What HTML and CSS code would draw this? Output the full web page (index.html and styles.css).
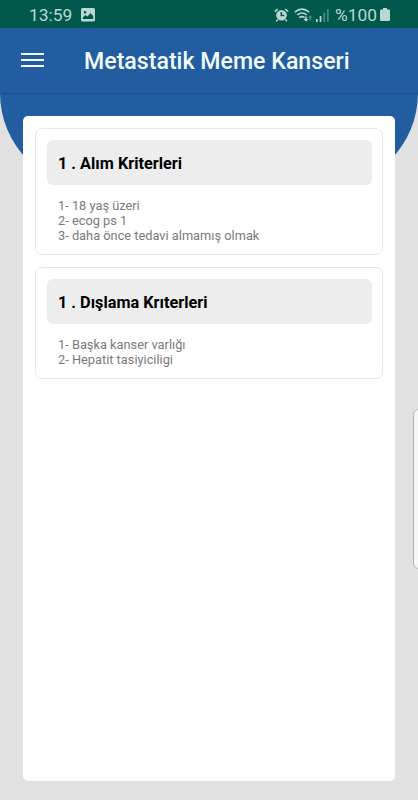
FILE: index.html
```html
<!DOCTYPE html>
<html lang="tr">
<head>
	<meta charset="UTF-8">
	<title>Metastatik Meme Kanseri</title>
	<link rel="stylesheet" href="styles.css">
</head>
<body>
	<div class="status">
		<span class="time">13:59</span>
		<svg class="pic" width="14" height="14" viewBox="0 0 14 14">
			<path fill-rule="evenodd" d="M1.5 0h11A1.5 1.5 0 0 1 14 1.5v10.500a1.500 1.500 0 0 1-1.500 1.500h-11A1.500 1.500 0 0 1 0 12V1.500A1.500 1.500 0 0 1 1.500 0zM1.800 11h10.400V8L9.500 5 6.500 8.500 4.500 7 1.800 9.500zM4 3a1.300 1.300 0 1 0 0 2.600A1.300 1.300 0 0 0 4 3z"/>
		</svg>
		<svg class="alarm" width="15" height="14" viewBox="0 0 15 14">
			<circle cx="7.500" cy="7.300" r="5.300"/>
			<path class="line" d="M.8 3.600L3.700 1M14.200 3.600L11.300 1M3.700 11.500L2.200 13.300M11.300 11.500l1.500 1.800"/>
			<path class="hand" d="M7.300 4v3.600h3"/>
		</svg>
		<svg class="wifi" width="19" height="14" viewBox="0 0 19 14">
			<path class="line" d="M.8 4.200q7.200-6 14.400 0M3.200 7q4.800-4 9.600 0M5.400 9.600q2.600-2 5.200 0"/>
			<path d="M11.200 8.500h1.600v2.500h1.600L12 13.700 9.700 11h1.500z"/>
			<path class="dim" d="M15.300 12.500V9.800h-1.500l2.300-2.700 2.200 2.700h-1.500v2.700z"/>
		</svg>
		<svg class="signal" width="13" height="13" viewBox="0 0 13 13">
			<path d="M0 10h1.700v3H0zM3.700 7h1.700v6H3.700z"/>
			<path class="dim" d="M7.400 3.500h1.700V13H7.400zM11 0h1.700v13H11z"/>
		</svg>
		<span class="percent">%100</span>
		<svg class="battery" width="10" height="13" viewBox="0 0 10 13">
			<path d="M3 0h4v1.500h2a1 1 0 0 1 1 1V12a1 1 0 0 1-1 1H1a1 1 0 0 1-1-1V2.500a1 1 0 0 1 1-1h2z"/>
		</svg>
	</div>
	<div class="header">
		<div class="menu">
			<span></span>
			<span></span>
			<span></span>
		</div>
		<h1>Metastatik Meme Kanseri</h1>
	</div>
	<div class="main">
		<div class="curve"></div>
		<div class="card">
			<div class="box">
				<h2>1 . Alım Kriterleri</h2>
				<ul>
					<li>1- 18 yaş üzeri</li>
					<li>2- ecog ps 1</li>
					<li>3- daha önce tedavi almamış olmak</li>
				</ul>
			</div>
			<div class="box">
				<h2>1 . Dışlama Krıterleri</h2>
				<ul>
					<li>1- Başka kanser varlığı</li>
					<li>2- Hepatit tasiyiciligi</li>
				</ul>
			</div>
		</div>
	</div>
	<div class="edge"></div>
</body>
</html>
```
FILE: styles.css
```css
*{
	box-sizing: border-box;
}
body{
	margin: 0;
	height: 800px;
	position: relative;
	overflow: hidden;
	display: flex;
	flex-direction: column;
	background: #e1e1e1;
	font-family: Roboto, "Noto Sans", sans-serif;
}
h1,h2,ul{
	margin: 0;
	padding: 0;
}
ul{
	list-style: none;
}
/* status bar */
.status{
	height: 28px;
	display: flex;
	align-items: center;
	padding: 1px 28px 0 29px;
	background: #00584b;
	color: #b9d8d2;
	font-size: 17.4px;
	white-space: nowrap;
}
.status svg{
	display: block;
	flex: none;
	fill: #b9d8d2;
}
.status .line{
	fill: none;
	stroke: #b9d8d2;
	stroke-width: 1.6;
}
.status .hand{
	fill: none;
	stroke: #00584b;
	stroke-width: 1.5;
}
.status .dim{
	opacity: .4;
}
.time{
	width: 43px;
}
.pic{
	margin-left: 9px;
}
.alarm{
	margin-left: auto;
}
.wifi{
	margin-left: 5px;
}
.signal{
	margin: 2px 6px 0 3px;
}
.percent{
	width: 42px;
}
.battery{
	margin-left: 3px;
}
/* title bar */
.header{
	height: 65px;
	flex: none;
	display: flex;
	align-items: center;
	padding-left: 21px;
	background: #215da0;
	box-shadow: 0 1px 1px rgba(0,0,0,.15);
	position: relative;
	z-index: 1;
}
.menu{
	width: 23px;
	margin-bottom: 2px;
	display: flex;
	flex-direction: column;
	gap: 4px;
}
.menu span{
	height: 2px;
	background: #eefaff;
}
h1{
	margin-left: 40px;
	padding-top: 2px;
	color: #f2fcff;
	font-size: 23.15px;
	font-weight: 500;
	line-height: 30px;
	white-space: nowrap;
}
.main{
	flex: 1;
	display: flex;
	padding: 23px 23px 19px;
	position: relative;
}
/* blue area behind the top of the card */
.curve{
	position: absolute;
	top: 0;
	left: 0;
	width: 100%;
	height: 95px;
	background: #215da0;
	border-radius: 0 0 95px 95px;
}
.card{
	flex: 1;
	position: relative;
	padding: 12px;
	background: #fff;
	border-radius: 5px;
}
.box{
	padding: 11px 10px 11px 11px;
	margin-bottom: 12px;
	border: 1px solid #e8e8e8;
	border-radius: 7px;
}
.box h2{
	height: 45px;
	padding-left: 11px;
	background: #ededed;
	border-radius: 6px;
	color: #000;
	font-size: 16.25px;
	font-weight: 700;
	line-height: 47px;
}
.box ul{
	padding: 13px 0 0 11px;
	color: #7a7a7a;
	font-size: 12.8px;
	line-height: 15px;
}
/* handle on the right side of the screen */
.edge{
	position: absolute;
	top: 409px;
	right: -8px;
	width: 13px;
	height: 160px;
	background: #f6f6f6;
	border: 1px solid #b5b5b5;
	border-radius: 6px;
}
```
